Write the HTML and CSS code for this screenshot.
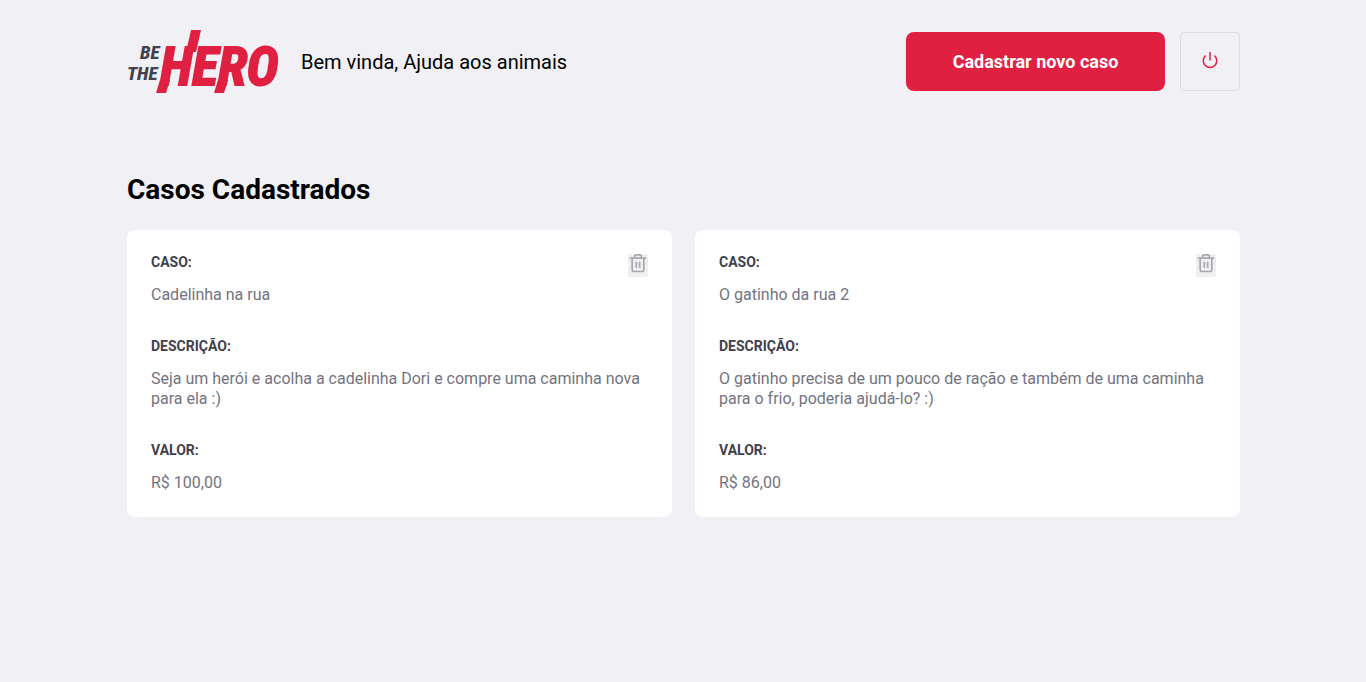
FILE: index.html
```html
<!DOCTYPE html>
<html lang="pt-BR">
<head>
  <meta charset="utf-8">
  <meta name="viewport" content="width=device-width, initial-scale=1">
  <title>Be The Hero</title>
  <link rel="stylesheet" href="styles.css">
</head>
<body>
  <div class="profile">
    <header class="header">
      <svg class="logo" viewBox="0 0 151 63" role="img" aria-label="Be The Hero">
        <g class="logo-small">
          <text x="13" y="29">BE</text>
          <text x="0" y="50">THE</text>
        </g>
        <text class="logo-hero" x="33" y="55">HERO</text>
        <path class="logo-bar" d="M33 50H43L39 63H29ZM64 0H74L69 22H59ZM91 50H101L97 63H87Z"/>
      </svg>
      <span class="welcome">Bem vinda, Ajuda aos animais</span>
      <a class="button" href="#novo">Cadastrar novo caso</a>
      <button class="logout" type="button" aria-label="Sair">
        <svg class="icon-power" viewBox="0 0 24 24" aria-hidden="true"><path d="M18.36 6.64a9 9 0 1 1-12.73 0M12 2v10"/></svg>
      </button>
    </header>

    <main>
      <h1 class="title">Casos Cadastrados</h1>
      <ul class="cases">
        <li class="case">
          <strong class="label">CASO:</strong>
          <p class="value">Cadelinha na rua</p>
          <strong class="label">DESCRIÇÃO:</strong>
          <p class="value">Seja um herói e acolha a cadelinha Dori e compre uma caminha nova para ela :)</p>
          <strong class="label">VALOR:</strong>
          <p class="value">R$ 100,00</p>
          <button class="delete" type="button" aria-label="Excluir caso">
            <svg class="icon-trash" viewBox="0 1 24 24" aria-hidden="true"><path d="M3 6h18M19 6v14a2 2 0 0 1-2 2H7a2 2 0 0 1-2-2V6M8 6V4a2 2 0 0 1 2-2h4a2 2 0 0 1 2 2v2M10 11v6M14 11v6"/></svg>
          </button>
        </li>
        <li class="case">
          <strong class="label">CASO:</strong>
          <p class="value">O gatinho da rua 2</p>
          <strong class="label">DESCRIÇÃO:</strong>
          <p class="value">O gatinho precisa de um pouco de ração e também de uma caminha para o frio, poderia ajudá-lo? :)</p>
          <strong class="label">VALOR:</strong>
          <p class="value">R$ 86,00</p>
          <button class="delete" type="button" aria-label="Excluir caso">
            <svg class="icon-trash" viewBox="0 1 24 24" aria-hidden="true"><path d="M3 6h18M19 6v14a2 2 0 0 1-2 2H7a2 2 0 0 1-2-2V6M8 6V4a2 2 0 0 1 2-2h4a2 2 0 0 1 2 2v2M10 11v6M14 11v6"/></svg>
          </button>
        </li>
      </ul>
    </main>
  </div>
</body>
</html>
```
FILE: styles.css
```css
* {
  box-sizing: border-box;
  margin: 0;
  padding: 0;
}

body {
  background: #f0f0f5;
  color: #000;
  font: 400 16px/20px Roboto, Arial, sans-serif;
}

.profile {
  width: 100%;
  max-width: 1162px;
  margin: 0 auto;
  padding: 30px 24px 30px 25px;
}

.header {
  display: flex;
  align-items: center;
}

.logo {
  width: 151px;
  height: 63px;
  flex-shrink: 0;
  overflow: visible;
}

.logo-small {
  fill: #41414d;
  font: italic 800 19px "Roboto Condensed", "Liberation Sans Narrow", Roboto, sans-serif;
}

.logo-hero {
  fill: #e02041;
  stroke: #e02041;
  stroke-width: 2px;
  font: italic 700 54px "Roboto Condensed", "Liberation Sans Narrow", Roboto, sans-serif;
}

.logo-bar {
  fill: #e02041;
}

.welcome {
  margin-left: 23px;
  font-size: 20px;
  line-height: 24px;
}

.button {
  width: 259px;
  height: 59px;
  margin-left: auto;
  border-radius: 8px;
  background: #e02041;
  color: #fff;
  font-size: 18px;
  font-weight: 700;
  line-height: 59px;
  text-align: center;
  text-decoration: none;
}

.logout {
  display: flex;
  align-items: center;
  justify-content: center;
  width: 60px;
  height: 59px;
  margin-left: 15px;
  padding-bottom: 4px;
  border: 1px solid #dcdce6;
  border-radius: 4px;
  background: transparent;
  cursor: pointer;
}

.icon-power,
.icon-trash {
  display: block;
  fill: none;
  stroke-width: 2;
  stroke-linecap: round;
  stroke-linejoin: round;
}

.icon-power {
  width: 18px;
  height: 18px;
  stroke: #e02041;
}

.title {
  margin: 80px 0 24px;
  font-size: 28px;
  font-weight: 700;
  line-height: 33px;
}

.cases {
  display: grid;
  grid-template-columns: repeat(2, 1fr);
  gap: 23px;
  list-style: none;
}

.case {
  position: relative;
  padding: 24px;
  border-radius: 8px;
  background: #fff;
}

.label {
  display: block;
  margin-bottom: 15px;
  color: #41414d;
  font-size: 14px;
  line-height: 16px;
}

.value {
  color: #737380;
}

.value + .label {
  margin-top: 33px;
}

.delete {
  position: absolute;
  top: 24px;
  right: 24px;
  padding: 0 0 3px;
  border: 0;
  background: #efefef;
  cursor: pointer;
}

.icon-trash {
  width: 20px;
  height: 20px;
  overflow: visible;
  stroke: #a8a8b3;
}
```
